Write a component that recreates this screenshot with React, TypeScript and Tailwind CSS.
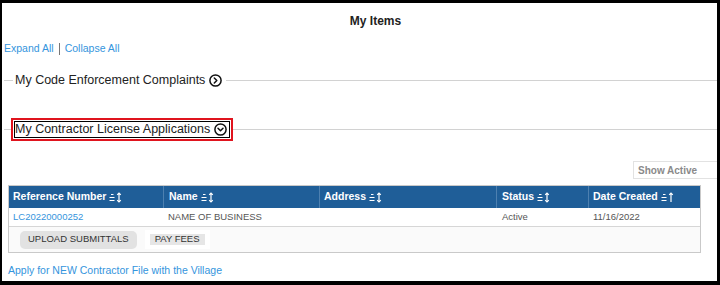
import React from "react";

function SortIcon({ up }: { up?: boolean }) {
  return (
    <svg width="14" height="11" viewBox="0 0 14 11" fill="none" stroke="white" strokeWidth="1.2" className="inline-block ml-[3px]">
      <path d="M2 2.5h2.5M0.5 5.5h5M0.5 8.5h5" />
      <path d="M10 1v9M8.2 2.8L10 1l1.8 1.8" />
      {!up && <path d="M8.2 8.2L10 10l1.8-1.8" />}
    </svg>
  );
}

function CircleChevron({ down }: { down?: boolean }) {
  return (
    <svg width="13" height="13" viewBox="0 0 13 13" fill="none" stroke="#111" strokeWidth="1.5" className="shrink-0">
      <circle cx="6.5" cy="6.5" r="5.6" />
      {down ? (
        <path d="M4 5.3l2.5 2.5L9 5.3" strokeLinecap="round" strokeLinejoin="round" />
      ) : (
        <path d="M5.3 4l2.5 2.5L5.3 9" strokeLinecap="round" strokeLinejoin="round" />
      )}
    </svg>
  );
}

export default function App() {
  const font = { fontFamily: '"Liberation Sans", Arial, sans-serif' };
  return (
    <div
      className="w-[720px] h-[285px] box-border border-black border-t-[3px] border-l-[2px] border-r-[3px] border-b-[4px] bg-white overflow-hidden"
      style={font}
    >
      <div className="h-[36px] flex items-center justify-center pl-[32px]">
        <span className="text-[12px] font-bold text-[#222]">My Items</span>
      </div>

      <div className="h-[20px] flex items-center pl-[2px] text-[10.5px] text-[#3595dd]">
        <span>Expand All</span>
        <span className="mx-[5px] w-px h-[12px] bg-[#777]"></span>
        <span>Collapse All</span>
      </div>

      <div className="h-[42px] flex items-center pl-[2px]">
        <div className="w-[9px] h-px bg-[#d2d2d2]"></div>
        <span className="ml-[2px] text-[12.5px] text-[#222] leading-[15px]">My Code Enforcement Complaints</span>
        <span className="ml-[4px]"><CircleChevron /></span>
        <div className="ml-[4px] flex-1 h-px bg-[#d2d2d2]"></div>
      </div>

      <div className="mt-[17px] h-[23px] flex items-center pl-[2px]">
        <div className="w-[7px] h-px bg-[#d2d2d2]"></div>
        <div className="border-2 border-[#e0141e] p-px">
          <div className="border border-black h-[17px] flex items-center pr-[2px]">
            <span className="text-[12.5px] text-[#222] leading-[15px]">My Contractor License Applications</span>
            <span className="ml-[4px]"><CircleChevron down /></span>
          </div>
        </div>
        <div className="flex-1 h-px bg-[#d2d2d2]"></div>
      </div>

      <div className="mt-[20px] flex justify-end">
        <div className="w-[84px] h-[18px] border border-r-0 border-[#e2e2e2] flex items-center pl-[4px] text-[10px] text-[#8a8a8a] font-bold">
          Show Active
        </div>
      </div>

      <div className="mt-[6px] ml-[6px] w-[693px] border border-[#c9c9c9]">
        <div className="flex h-[22px] bg-[#1f5e98] text-white text-[10.5px] font-bold">
          <div className="w-[155px] flex items-center pl-[4px] border-r border-[#4d80b0]">Reference Number<SortIcon /></div>
          <div className="w-[156px] flex items-center pl-[5px] border-r border-[#4d80b0]">Name<SortIcon /></div>
          <div className="w-[177px] flex items-center pl-[4px] border-r border-[#4d80b0]">Address<SortIcon /></div>
          <div className="w-[92px] flex items-center pl-[5px] border-r border-[#4d80b0]">Status<SortIcon /></div>
          <div className="flex-1 flex items-center pl-[4px]">Date Created<SortIcon up /></div>
        </div>
        <div className="flex h-[19px] border-b border-[#d6d6d6] text-[9.5px] text-[#555] bg-white">
          <div className="w-[155px] flex items-center pl-[4px] text-[#3595dd]">LC20220000252</div>
          <div className="w-[156px] flex items-center pl-[4px]">NAME OF BUSINESS</div>
          <div className="w-[177px]"></div>
          <div className="w-[92px] flex items-center pl-[5px]">Active</div>
          <div className="flex-1 flex items-center pl-[4px]">11/16/2022</div>
        </div>
        <div className="h-[25px] flex items-center pl-[11px] bg-[#fafafa]">
          <div className="h-[18px] px-[8px] rounded-[5px] bg-[#e2e2e2] flex items-center text-[9.5px] text-[#333]">
            UPLOAD SUBMITTALS
          </div>
          <div className="ml-[8px] bg-white px-[5px] py-[4px] flex items-center">
            <div className="h-[11px] px-[5px] bg-[#e6e6e6] flex items-center text-[9.5px] text-[#333]">PAY FEES</div>
          </div>
        </div>
      </div>

      <div className="mt-[10px] pl-[6px] text-[10.5px] leading-[14px] text-[#3595dd]">
        Apply for NEW Contractor File with the Village
      </div>
    </div>
  );
}
